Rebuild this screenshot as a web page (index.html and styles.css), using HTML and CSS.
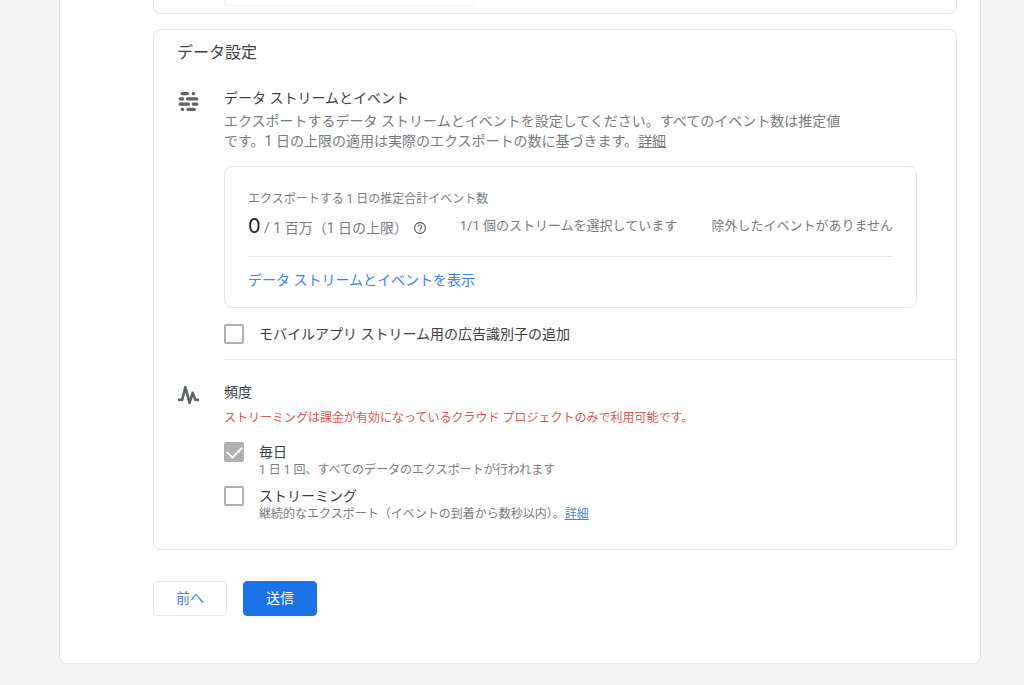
FILE: index.html
```html
<!DOCTYPE html>
<html lang="ja">
<head>
<meta charset="utf-8">
<meta name="viewport" content="width=device-width, initial-scale=1">
<title>データ設定</title>
<link rel="stylesheet" href="styles.css">
</head>
<body>
<main class="sheet">
  <section class="card card-previous"><div class="field-end"></div></section>

  <form class="form">
    <section class="card settings">
      <h1 class="card-title">データ設定</h1>

      <div class="group">
        <svg class="group-icon" viewBox="0 0 20 20" aria-hidden="true">
          <g fill="none" stroke="#5f6368" stroke-width="3" stroke-linecap="round">
            <path d="M4 2.500h5M14.500 2.500h.5M2 7.500h2.500M9 7.500h9M2 12.500h8M14.500 12.500h3.500M4 17.500h.5M9.500 17.500h6"/>
          </g>
        </svg>
        <div class="group-body">
          <h2 class="group-title">データ ストリームとイベント</h2>
          <p class="description">エクスポートするデータ ストリームとイベントを設定してください。すべてのイベント数は推定値です。1 日の上限の適用は実際のエクスポートの数に基づきます。<a class="plain-link" href="#limits">詳細</a></p>

          <div class="panel">
            <p class="panel-label">エクスポートする 1 日の推定合計イベント数</p>
            <div class="panel-stats">
              <p class="total"><span class="total-value">0</span> / 1 百万（1 日の上限）
                <button class="help" type="button" aria-label="ヘルプ">
                  <svg viewBox="2 2 20 20" aria-hidden="true"><path fill="#5f6368" d="M11 18h2v-2h-2v2zm1-16C6.480 2 2 6.480 2 12s4.480 10 10 10 10-4.480 10-10S17.520 2 12 2zm0 18c-4.410 0-8-3.590-8-8s3.590-8 8-8 8 3.590 8 8-3.590 8-8 8zm0-14c-2.210 0-4 1.790-4 4h2c0-1.100.9-2 2-2s2 .9 2 2c0 2-3 1.750-3 5h2c0-2.250 3-2.500 3-5 0-2.210-1.790-4-4-4z"/></svg>
                </button>
              </p>
              <p class="stat">1/1 個のストリームを選択しています</p>
              <p class="stat">除外したイベントがありません</p>
            </div>
            <a class="panel-link" href="#streams">データ ストリームとイベントを表示</a>
          </div>

          <label class="option option-single">
            <input class="check" type="checkbox">
            <span class="option-name">モバイルアプリ ストリーム用の広告識別子の追加</span>
          </label>
        </div>
      </div>

      <div class="group group-frequency">
        <svg class="group-icon" viewBox="0 0 20 20" aria-hidden="true">
          <path d="M0 14h4L7 2l4 15 3-9.500 2.500 6.500H20" fill="none" stroke="#5f6368" stroke-width="2.500" stroke-linejoin="round"/>
        </svg>
        <div class="group-body">
          <h2 class="group-title">頻度</h2>
          <p class="warning">ストリーミングは課金が有効になっているクラウド プロジェクトのみで利用可能です。</p>
          <div class="option">
            <input class="check" id="daily" type="checkbox" checked disabled>
            <div>
              <label class="option-name" for="daily">毎日</label>
              <p class="option-note">1 日 1 回、すべてのデータのエクスポートが行われます</p>
            </div>
          </div>
          <div class="option">
            <input class="check" id="streaming" type="checkbox">
            <div>
              <label class="option-name" for="streaming">ストリーミング</label>
              <p class="option-note">継続的なエクスポート（イベントの到着から数秒以内）。<a class="note-link" href="#streaming-info">詳細</a></p>
            </div>
          </div>
        </div>
      </div>
    </section>

    <div class="actions">
      <button class="button" type="button">前へ</button>
      <button class="button button-primary" type="submit">送信</button>
    </div>
  </form>
</main>
</body>
</html>
```
FILE: styles.css
```css
* { box-sizing: border-box; }

body {
  margin: 0;
  background: #f1f3f4;
  color: #3c4043;
  font: 14px/20px Roboto, "Noto Sans CJK JP", sans-serif;
}

h1, h2, p { margin: 0; font-weight: 400; }

.sheet {
  margin: 0 43px 21px 59px;
  padding: 0 23px 47px 93px;
  background: #fff;
  border: 1px solid #e3e5e8;
  border-top: 0;
  border-radius: 0 0 8px 8px;
}

.card {
  border: 1px solid #e4e6e8;
  border-radius: 8px;
}

.card-previous {
  padding: 0 70px 7px;
  border-top: 0;
  border-radius: 0 0 8px 8px;
}

.field-end {
  width: 250px;
  height: 6px;
  border: 1px solid #f1f2f3;
  border-top: 0;
  border-radius: 0 0 4px 4px;
}

.settings { margin-top: 15px; padding: 11px 0 26px 23px; }

.card-title { font-size: 16px; line-height: 24px; }

.group { display: flex; gap: 24px; padding-top: 23px; }
.group-frequency { padding-top: 22px; }
.group-icon { flex: none; width: 23px; height: 23px; padding: 1px; margin-top: 2px; }
.group-body { flex: 1; min-width: 0; }
.group-title { font-size: 14px; line-height: 20px; }

.description { max-width: 628px; padding-top: 3px; color: #777b7f; }
.plain-link { color: inherit; }

.panel {
  margin: 15px 39px 0 0;
  padding: 22px 23px 17px;
  border: 1px solid #e4e6e8;
  border-radius: 8px;
}

.panel-label { font-size: 12px; color: #777b7f; }

.panel-stats {
  display: flex;
  align-items: flex-start;
  justify-content: space-between;
  padding: 2px 0 13px;
  border-bottom: 1px solid #e4e6e8;
  color: #777b7f;
}

.total { line-height: 30px; }
.total-value { font-family: Inter, sans-serif; font-size: 20px; color: #202124; }
.help { width: 12px; height: 12px; margin-left: 2px; padding: 0; border: 0; background: none; vertical-align: -1px; }
.help svg { display: block; }
.stat { font-size: 13px; line-height: 30px; }
.panel-link { display: inline-block; margin-top: 13px; color: #3b82ee; text-decoration: none; }

.option { display: flex; gap: 15px; margin-top: 7px; }
.option-single { align-items: center; margin-top: 16px; padding-bottom: 15px; border-bottom: 1px solid #e4e6e8; }
.option-name { display: block; font-size: 14px; line-height: 20px; }
.option-note { font-size: 12px; line-height: 17px; color: #777b7f; }
.note-link { color: #3b82ee; }

.check {
  appearance: none;
  flex: none;
  display: grid;
  width: 20px;
  height: 20px;
  margin: 0;
  border: 2px solid #b0b0b0;
  border-radius: 2px;
}
.check:checked { background: #b0b0b0; }
.check:checked::after {
  content: "";
  place-self: center;
  width: 13px;
  height: 7px;
  margin-bottom: 3px;
  border: solid #fff;
  border-width: 0 0 2px 2px;
  rotate: -45deg;
}

.warning { margin: 6px 0 14px; font-size: 12px; color: #e0554d; }

.actions { display: flex; gap: 16px; margin-top: 31px; }

.button {
  min-width: 74px;
  padding: 6px 22px 7px;
  border: 1px solid #e4e6e8;
  border-radius: 4px;
  background: #fff;
  color: #4285f4;
  font: inherit;
}
.button-primary { border-color: #1a73e8; background: #1a73e8; color: #fff; }
```
